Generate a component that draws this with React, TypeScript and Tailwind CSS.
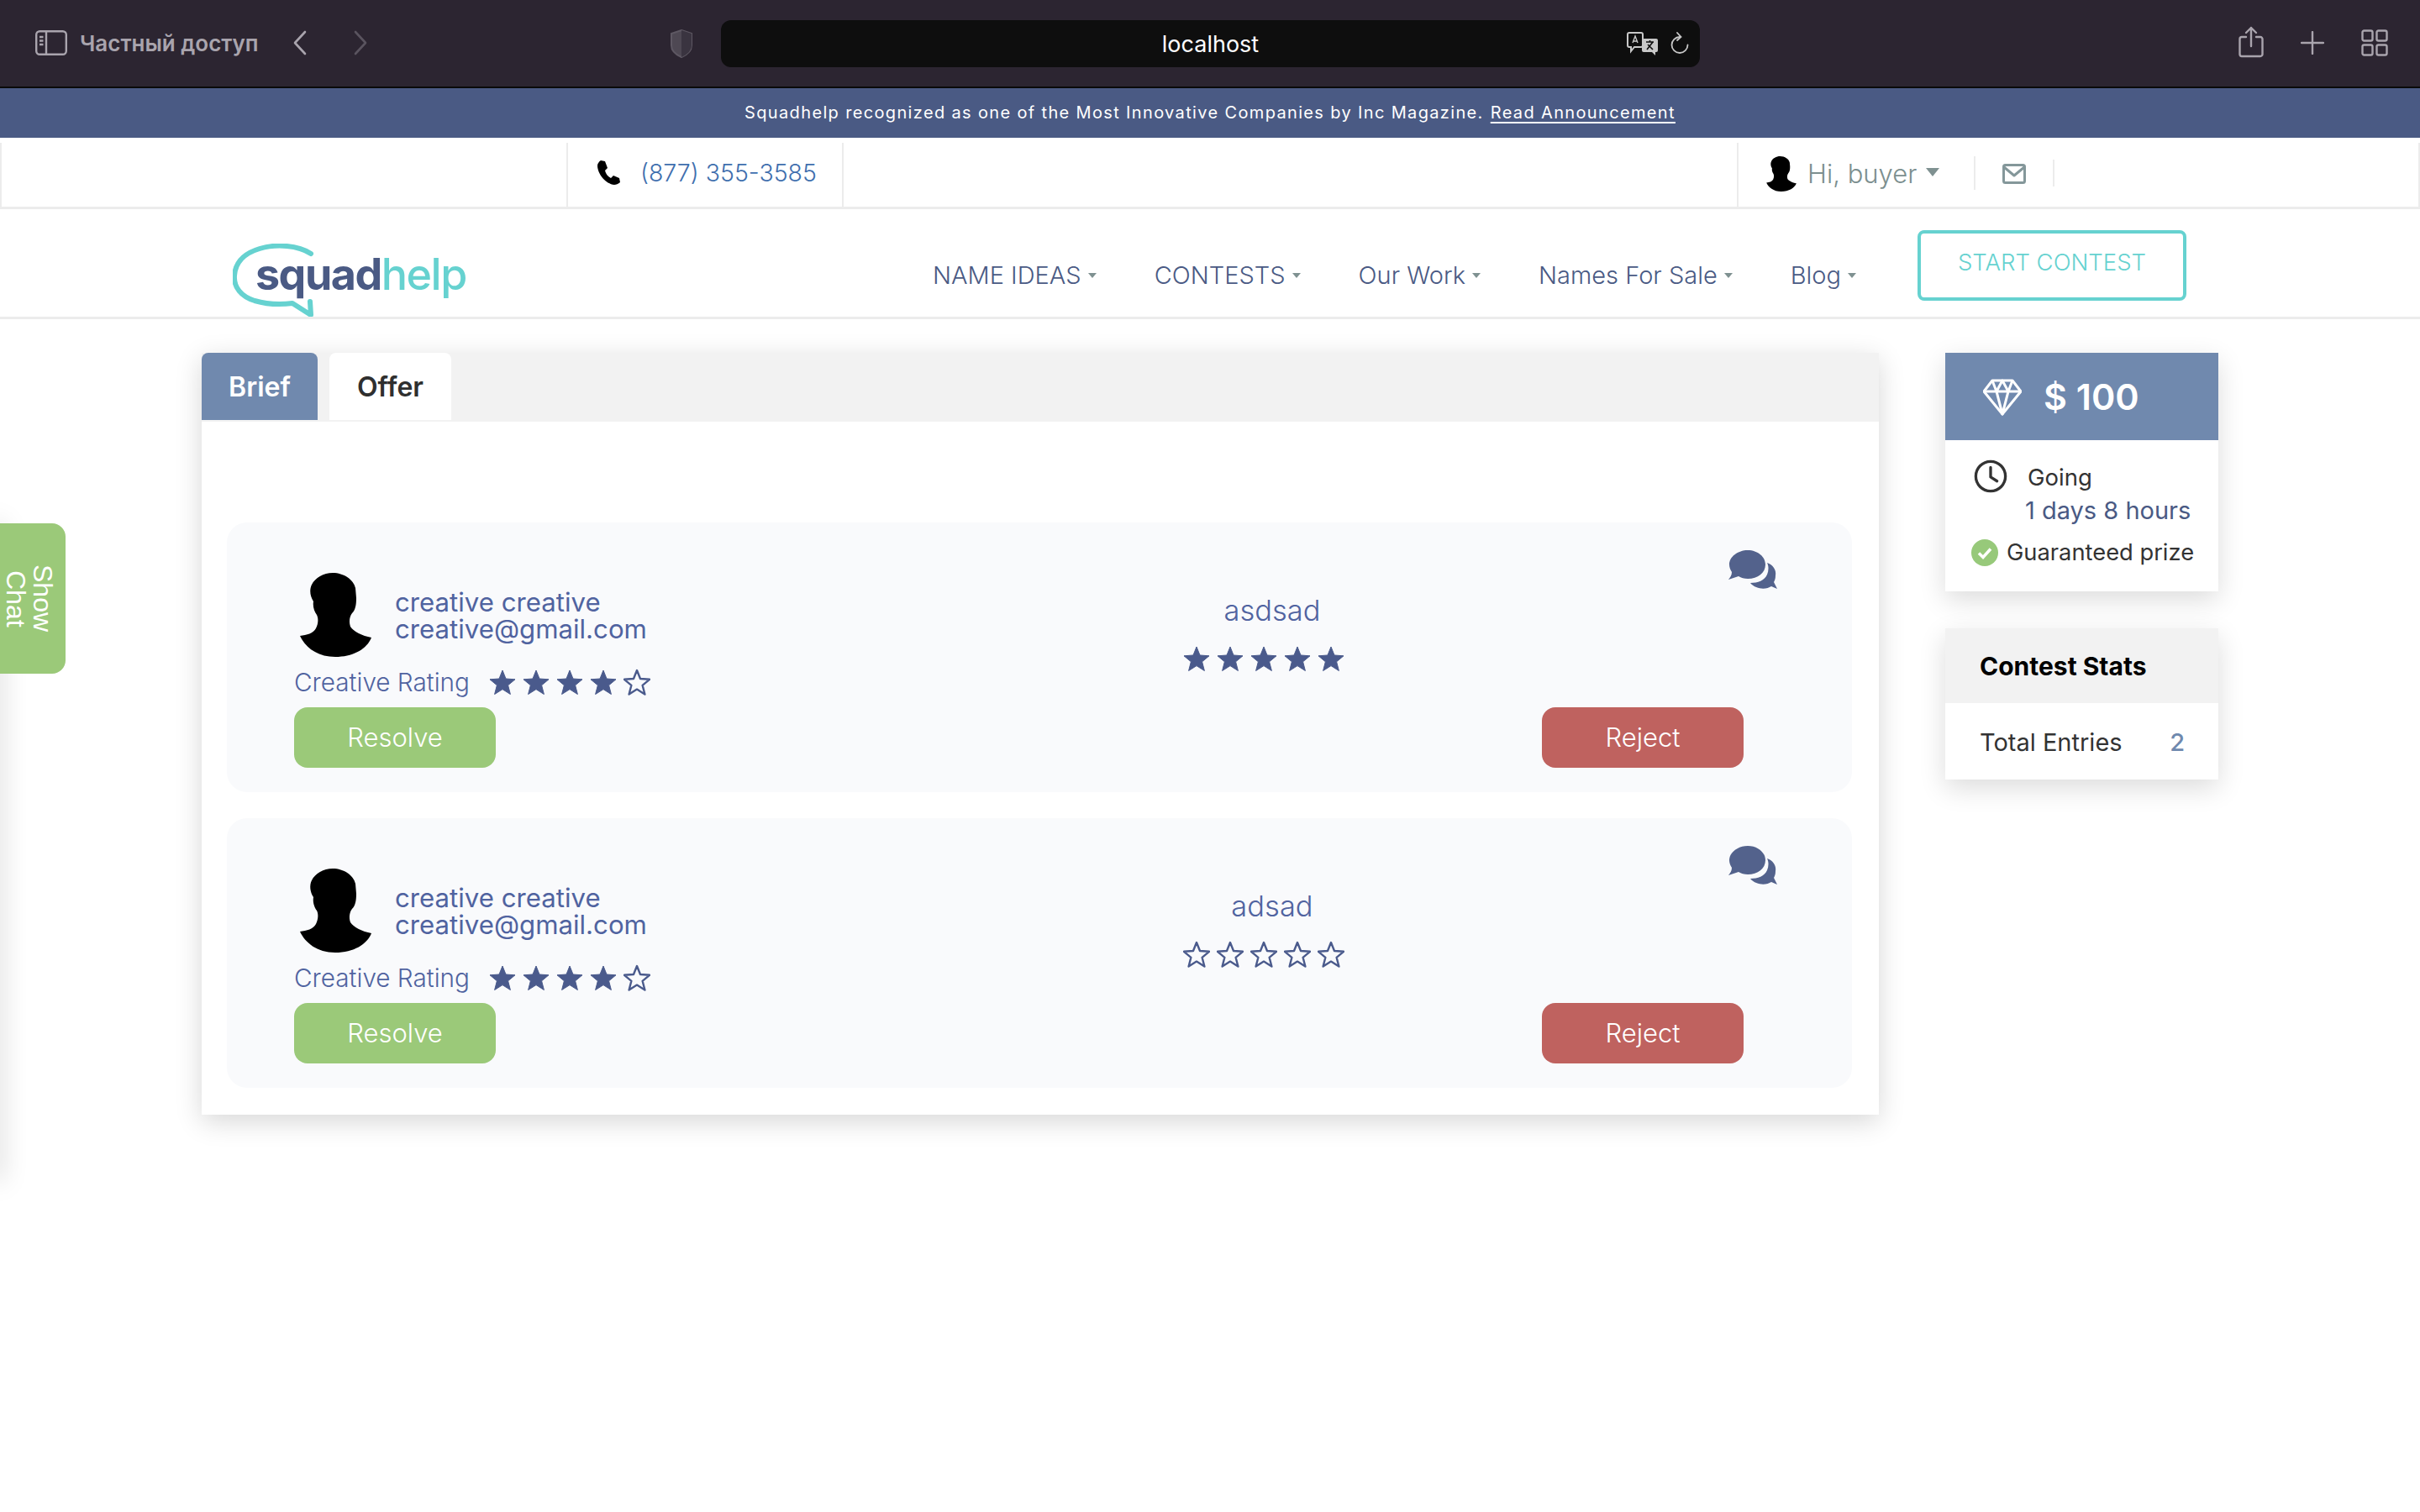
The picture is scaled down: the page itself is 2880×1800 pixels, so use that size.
const NAV_ITEMS = ['NAME IDEAS', 'CONTESTS', 'Our Work', 'Names For Sale', 'Blog']

const ENTRIES = [
  { title: 'asdsad', rating: 5 },
  { title: 'adsad', rating: 0 },
]

const STAR_POINTS = '16,2 20,12 31,12.8 22.6,19.8 25.4,30.5 16,24.6 6.6,30.5 9.4,19.8 1,12.8 12,12'

function Star({ filled }: { filled: boolean }) {
  return (
    <svg viewBox="0 0 32 32" className="w-8 h-8 shrink-0">
      <polygon
        points={STAR_POINTS}
        fill={filled ? '#4a5a8c' : 'none'}
        stroke="#4a5a8c"
        strokeWidth={filled ? 1 : 2.4}
        strokeLinejoin="round"
      />
    </svg>
  )
}

function Stars({ count }: { count: number }) {
  return (
    <div className="flex gap-2">
      {[0, 1, 2, 3, 4].map((i) => (
        <Star key={i} filled={i < count} />
      ))}
    </div>
  )
}

function Silhouette({ className }: { className: string }) {
  return (
    <svg viewBox="0 0 85 100" className={className}>
      <path
        d="M39 0C52 0 64 8 66 18L67 30C67 38 66 44 62 48C59 52 58 58 60 64C64 70 74 75 85 77C80 90 64 100 42 100C20 100 6 88 0 75C8 74 16 72 19 66C22 60 22 54 20 50C17 46 15 40 16 34C12 28 11 20 14 14C18 6 28 0 39 0Z"
        fill="#000"
      />
    </svg>
  )
}

function Caret() {
  return <span className="inline-block ml-2 w-0 h-0 border-x-[5px] border-x-transparent border-t-[6px] border-t-[#7f9191]" />
}

function BrowserBar() {
  return (
    <div className="h-[105px] bg-[#2c2531] border-b-2 border-[#0a0a0a] flex items-start text-[#a9a4ad]">
      {/* Sidebar toggle and private label */}
      <svg viewBox="0 0 38 30" className="w-[38px] h-[30px] ml-[42px] mt-[36px]" fill="none" stroke="currentColor" strokeWidth="2.4">
        <rect x="1.2" y="1.2" width="35.6" height="27.6" rx="4" />
        <path d="M13 1.5v27M5 8h4.5M5 12.5h4.5M5 17h4.5" />
      </svg>
      <span className="ml-[15px] mt-[36px] w-[214px] text-[26px] leading-[32px] font-semibold whitespace-nowrap">Частный доступ</span>
      <svg viewBox="0 0 18 30" className="w-[18px] h-[30px] ml-[39px] mt-[36px]" fill="none" stroke="currentColor" strokeWidth="2.6" strokeLinecap="round" strokeLinejoin="round">
        <path d="M15 2L3 15l12 13" />
      </svg>
      <svg viewBox="0 0 18 30" className="w-[18px] h-[30px] ml-[54px] mt-[36px] text-[#5a545f]" fill="none" stroke="currentColor" strokeWidth="2.6" strokeLinecap="round" strokeLinejoin="round">
        <path d="M3 2l12 13L3 28" />
      </svg>
      <svg viewBox="0 0 28 34" className="w-[28px] h-[34px] ml-[359px] mt-[35px]">
        <path d="M14 1l12 4v14c0 6-5 11-12 14C7 30 2 25 2 19V5z" fill="#4e4853" stroke="#5e5863" strokeWidth="2" />
        <path d="M14 1v32c7-3 12-8 12-14V5z" fill="#3a3440" />
      </svg>

      {/* Address bar */}
      <div className="relative ml-[33px] mt-[24px] w-[1165px] h-[56px] bg-[#0e0e0e] rounded-xl flex items-center justify-center">
        <span className="text-[27px] text-white leading-none">localhost</span>
        <svg viewBox="0 0 38 28" className="absolute left-[1078px] top-[14px] w-[38px] h-[28px]">
          <path d="M3 1h14a2 2 0 0 1 2 2v13a2 2 0 0 1-2 2H9l-4 5v-5H3a2 2 0 0 1-2-2V3a2 2 0 0 1 2-2z" fill="none" stroke="#c8c8c8" strokeWidth="2" />
          <path d="M20 8h15a2 2 0 0 1 2 2v12a2 2 0 0 1-2 2h-1v4l-4-4H20a2 2 0 0 1-2-2V10a2 2 0 0 1 2-2z" fill="#c8c8c8" />
          <path d="M7 13l3-8 3 8M8 11h4" fill="none" stroke="#c8c8c8" strokeWidth="1.4" />
          <path d="M23 12h9M27.500 10v2M24 21l7-9M31 21l-6-6" fill="none" stroke="#0e0e0e" strokeWidth="1.6" />
        </svg>
        <svg viewBox="0 0 22 26" className="absolute left-[1130px] top-[14px] w-[22px] h-[26px]" fill="none" stroke="#c8c8c8" strokeWidth="1.8" strokeLinecap="round">
          <path d="M11 6a9.500 9.500 0 1 0 9.500 9.500" />
          <path d="M8 1l4.500 5L8 10" />
        </svg>
      </div>

      {/* Right toolbar */}
      <svg viewBox="0 0 30 38" className="w-[30px] h-[38px] ml-[641px] mt-[31px]" fill="none" stroke="currentColor" strokeWidth="2.4" strokeLinecap="round" strokeLinejoin="round">
        <path d="M9 13H4a2.500 2.500 0 0 0-2.500 2.500v18A2.500 2.500 0 0 0 4 36h22a2.500 2.500 0 0 0 2.500-2.500v-18A2.500 2.500 0 0 0 26 13h-5" />
        <path d="M15 24V2M9 8l6-6 6 6" />
      </svg>
      <svg viewBox="0 0 28 28" className="w-[28px] h-[28px] ml-[44px] mt-[37px]" fill="none" stroke="currentColor" strokeWidth="2.4" strokeLinecap="round">
        <path d="M14 1v26M1 14h26" />
      </svg>
      <svg viewBox="0 0 32 32" className="w-[32px] h-[32px] ml-[44px] mt-[35px]" fill="none" stroke="currentColor" strokeWidth="2.4">
        <rect x="1.500" y="1.500" width="12" height="12" rx="2" />
        <rect x="18.500" y="1.500" width="12" height="12" rx="2" />
        <rect x="1.500" y="18.500" width="12" height="12" rx="2" />
        <rect x="18.500" y="18.500" width="12" height="12" rx="2" />
      </svg>
    </div>
  )
}

function Banner() {
  return (
    <div className="h-[59px] bg-[#4a5a84] flex items-center justify-center text-white text-[20px] tracking-[1.35px] leading-none pb-[2px]">
      <span>Squadhelp recognized as one of the Most Innovative Companies by Inc Magazine.</span>
      <span className="ml-[8px] underline underline-offset-4">Read Announcement</span>
    </div>
  )
}

function ContactBar() {
  return (
    <div className="h-[85px] pt-[6px] border-b-[3px] border-[#ececec] flex">
      <div className="w-[676px] border-x-2 border-[#ececec]" />
      <div className="w-[328px] border-r-2 border-[#ececec] flex items-center pl-[33px] pb-[6px]">
        <svg viewBox="0 0 30 30" className="w-[30px] h-[30px]">
          <path d="M6 1l5 1 3 8-3 3c1 4 3 7 7 9l3-3 7 3 1 5c-2 2-5 3-7 3C12 29 2 17 2 7c0-2 2-5 4-6z" fill="#000" />
        </svg>
        <span className="ml-[23px] pt-[3px] text-[28.5px] leading-none text-[#3f6fae] font-light">(877) 355-3585</span>
      </div>
      <div className="w-[1065px] border-r-2 border-[#ececec]" />
      <div className="flex-1 border-r-2 border-[#ececec] flex items-start pl-[33px]">
        <Silhouette className="w-[36px] h-[42px] mt-[16px]" />
        <span className="ml-[13px] mt-[16px] text-[31px] leading-[42px] text-[#7c8f8f] font-light">Hi, buyer</span>
        <span className="ml-[11px] mt-[30px] w-0 h-0 border-x-[8px] border-x-transparent border-t-[10px] border-t-[#7f9191]" />
        <div className="ml-[41px] mt-[16px] w-[2px] h-[40px] bg-[#ececec]" />
        <svg viewBox="0 0 28 24" className="ml-[32px] mt-[25px] w-[28px] h-[24px]" fill="none" stroke="#84979a" strokeWidth="3" strokeLinejoin="round">
          <rect x="1.500" y="1.500" width="25" height="21" rx="2" />
          <path d="M2 4l12 10L26 4" />
        </svg>
        <div className="ml-[32px] mt-[20px] w-[2px] h-[32px] bg-[#ececec]" />
      </div>
    </div>
  )
}

function Logo() {
  return (
    <div className="relative w-[278px] h-[87px] mt-[41px] shrink-0">
      <svg viewBox="0 0 278 87" className="absolute inset-0 w-full h-full" fill="none">
        <path
          d="M93 12C78 2 52 0 32 6 12 12 3 24 2 38c-1 14 8 25 24 30 14 4 30 5 45 3l22 14-1-16"
          stroke="#66d2d0"
          strokeWidth="6"
          strokeLinejoin="round"
          strokeLinecap="round"
        />
      </svg>
      <span className="absolute left-[27px] top-[7px] text-[52px] leading-[60px] font-bold tracking-[-1.5px] text-[#4a5a84]">
        squad<span className="font-medium text-[#66d2d0]">help</span>
      </span>
    </div>
  )
}

function MainNav() {
  return (
    <div className="h-[131px] border-b-[3px] border-[#ececec] flex items-start pl-[277px]">
      <Logo />
      <nav className="ml-[555px] mt-[57px] flex gap-[69px] text-[29px] leading-[44px] font-light text-[#4a5a84]">
        {NAV_ITEMS.map((item) => (
          <div key={item} className="flex items-center">
            <span>{item}</span>
            <Caret />
          </div>
        ))}
      </nav>
      <div className="ml-[73px] mt-[25px] w-[320px] h-[84px] border-4 border-[#66d2d0] rounded-lg flex justify-center pt-[15px] text-[27.500px] leading-[38px] font-light text-[#66d2d0]">
        START CONTEST
      </div>
    </div>
  )
}

function EntryCard({ title, rating }: { title: string; rating: number }) {
  return (
    <div className="bg-[#f9fafc] rounded-3xl px-[80px] pt-[33px] pb-[29px] flex">
      <div className="w-[963px] pt-[27px] shrink-0">
        <div className="flex items-center h-[100px]">
          <Silhouette className="ml-[7px] w-[85px] h-[100px]" />
          <div className="ml-[28px] pt-[2px] text-[31.200px] leading-[32px] text-[#5063a0]">
            <div>creative creative</div>
            <div>creative@gmail.com</div>
          </div>
        </div>
        <div className="h-[60px] flex items-center">
          <span className="text-[29.700px] font-light text-[#5063a0]">Creative Rating</span>
          <div className="ml-[23px]">
            <Stars count={4} />
          </div>
        </div>
        <button className="w-[240px] h-[72px] pt-[1px] rounded-2xl bg-[#9bc979] text-white text-[31px] font-light">
          Resolve
        </button>
      </div>
      <div className="w-[400px] pt-[50px] shrink-0 flex flex-col items-center">
        <div className="pl-[2px] text-[34.500px] leading-[44px] font-light text-[#5063a0]">{title}</div>
        <div className="mt-[19px] pr-[18px]">
          <Stars count={rating} />
        </div>
      </div>
      <div className="flex-1 flex flex-col justify-between items-end">
        <svg viewBox="0 0 60 46" className="w-[60px] h-[46px] mr-[8px]">
          <path d="M24 0C36 0 45 8 45 17C45 27 36 34 24 34C20 34 16 33 13 31L1 35C3 32 5 30 5 26C3 23 2 20 2 17C2 8 12 0 24 0Z" fill="#53628c" />
          <path d="M47 15C55 18 58 24 57 30C57 34 56 36 55 38L59 46L52 43C46 47 34 47 27 39C36 39 44 36 47 29C49 24 49 19 47 15Z" fill="#53628c" />
        </svg>
        <button className="w-[240px] h-[72px] pt-[1px] mr-[49px] rounded-2xl bg-[#bf625f] text-white text-[31px] font-light">
          Reject
        </button>
      </div>
    </div>
  )
}

function PrizeCard() {
  return (
    <div className="bg-white shadow-[0_10px_30px_rgba(0,0,0,0.14)]">
      <div className="h-[104px] bg-[#7089ae] flex items-center pl-[45px] text-white">
        <svg viewBox="0 0 46 46" className="w-[46px] h-[46px]" fill="none" stroke="#fff" strokeWidth="3" strokeLinejoin="round">
          <path d="M11 4h24l10 13-22 27L1 17z" />
          <path d="M1 17h44M11 4l5 13 7 27 7-27 5-13M16 17l7-13 7 13" />
        </svg>
        <span className="ml-[26px] text-[43px] font-semibold leading-none">$ 100</span>
      </div>
      <div className="h-[180px] pt-[20px] pl-[31px] text-[#333]">
        <div className="flex items-start">
          <svg viewBox="0 0 42 42" className="ml-[2px] mt-[3px] w-[42px] h-[40px]" fill="none" stroke="#333" strokeWidth="3.500" strokeLinecap="round" strokeLinejoin="round">
            <circle cx="21" cy="21" r="18.500" />
            <path d="M21 10v12l8 5" />
          </svg>
          <span className="ml-[23px] mt-[6px] text-[27.500px] leading-[36px]">Going</span>
        </div>
        <div className="mt-[1px] pl-[64px] text-[29px] leading-[40px] text-[#4a5a84]">1 days 8 hours</div>
        <div className="mt-[12px] flex items-center">
          <svg viewBox="0 0 32 32" className="w-[32px] h-[32px]">
            <circle cx="16" cy="16" r="16" fill="#97c97a" />
            <path d="M9 16.500l5 5 9-10" fill="none" stroke="#fff" strokeWidth="3.500" />
          </svg>
          <span className="ml-[10px] text-[27.300px] leading-[36px]">Guaranteed prize</span>
        </div>
      </div>
    </div>
  )
}

function StatsCard() {
  return (
    <div className="mt-[44px] bg-white shadow-[0_10px_30px_rgba(0,0,0,0.14)]">
      <div className="h-[89px] pt-[2px] bg-[#f2f2f2] flex items-center pl-[41px] text-[30px] font-bold text-black">
        Contest Stats
      </div>
      <div className="h-[91px] pt-[2px] flex items-center justify-between pl-[41px] pr-[40px] text-[29px]">
        <span className="text-[#333]">Total Entries</span>
        <span className="text-[#6f89ae] font-medium">2</span>
      </div>
    </div>
  )
}

export default function App() {
  return (
    <div className="relative min-h-[1800px] bg-white overflow-hidden font-[Inter,sans-serif]">
      <BrowserBar />
      <Banner />
      <ContactBar />
      <MainNav />

      <div className="flex items-start pl-[240px] pt-[40px]">
        <div className="w-[1996px] bg-white shadow-[0_8px_30px_rgba(0,0,0,0.16)]">
          <div className="h-[82px] bg-[#f2f2f2] flex gap-[14px] items-start">
            <div className="w-[138px] h-[80px] pt-[2px] bg-[#7089ae] rounded-t-lg flex items-center justify-center text-white text-[32px] font-semibold">
              Brief
            </div>
            <div className="w-[145px] h-[80px] pt-[2px] bg-white rounded-t-lg flex items-center justify-center text-[#2f2f2f] text-[32px] font-semibold">
              Offer
            </div>
          </div>
          <div className="pt-[120px] pl-[30px] pr-[32px] pb-[32px] flex flex-col gap-[31px]">
            {ENTRIES.map((entry) => (
              <EntryCard key={entry.title} title={entry.title} rating={entry.rating} />
            ))}
          </div>
        </div>
        <div className="ml-[79px] w-[325px]">
          <PrizeCard />
          <StatsCard />
        </div>
      </div>

      {/* Off-canvas chat panel edge and its tab */}
      <div className="absolute -left-[10px] top-[623px] w-[10px] h-[782px] shadow-[0_0_30px_rgba(0,0,0,0.25)]" />
      <div className="absolute left-0 top-[623px] w-[78px] h-[179px] bg-[#9bc979] rounded-r-2xl flex items-center justify-center pr-[8px]">
        <span className="[writing-mode:vertical-rl] text-white text-[32px] leading-[32px] font-['Liberation_Sans',sans-serif] text-center">
          Show
          <br />
          Chat
        </span>
      </div>
    </div>
  )
}
